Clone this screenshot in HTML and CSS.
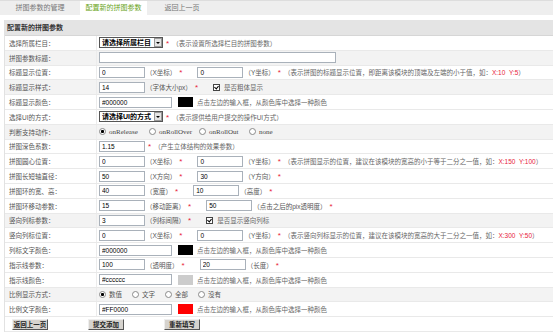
FILE: index.html
```html
<!DOCTYPE html>
<html>
<head>
<meta charset="utf-8">
<title>配置新的拼图参数</title>
<link rel="stylesheet" href="styles.css">
</head>
<body>
    <div class="tabs">
        <a class="tab">拼图参数的管理</a>
        <a class="tab active">配置新的拼图参数</a>
        <a class="tab">返回上一页</a>
    </div>

    <div class="panel">
        <div class="panel-title">配置新的拼图参数</div>
        <form>
            <div class="row">
                <label class="label">选择所属栏目：</label>
                <div class="field">
                    <span class="select"><select><option>请选择所属栏目</option></select></span>
                    <span class="req">*</span>
                    <span class="tip">（表示设置所选择栏目的拼图参数）</span>
                </div>
            </div>
            <div class="row alt">
                <label class="label">拼图参数标题：</label>
                <div class="field"><input type="text" class="txt txt-wide"></div>
            </div>
            <div class="row">
                <label class="label">标题显示位置：</label>
                <div class="field">
                    <input type="text" class="txt" value="0"><span class="unit">（X坐标）</span><span class="req">*</span>
                    <input type="text" class="txt next" value="0"><span class="unit">（Y坐标）</span><span class="req">*</span>
                    <span class="tip">（表示拼图的标题显示位置，即距离该模块的顶端及左端的小于值，如：<em>X:10&nbsp;&nbsp;Y:5</em>）</span>
                </div>
            </div>
            <div class="row alt">
                <label class="label">标题显示样式：</label>
                <div class="field">
                    <input type="text" class="txt" value="14"><span class="unit">（字体大小px）</span><span class="req">*</span>
                    <input type="checkbox" class="chk next" checked><span class="tip">是否粗体显示</span>
                </div>
            </div>
            <div class="row">
                <label class="label">标题显示颜色：</label>
                <div class="field">
                    <input type="text" class="txt txt-color" value="#000000"><span class="swatch sw-black"></span>
                    <span class="tip">点击左边的输入框，从颜色库中选择一种颜色</span>
                </div>
            </div>
            <div class="row">
                <label class="label">选择UI的方式：</label>
                <div class="field">
                    <span class="select"><select><option>请选择UI的方式</option></select></span>
                    <span class="req">*</span>
                    <span class="tip">（表示提供给用户提交的操作UI方式）</span>
                </div>
            </div>
            <div class="row alt">
                <label class="label">判断支持动作：</label>
                <div class="field radios">
                    <label class="opt mono"><input type="radio" name="act" checked>onRelease</label>
                    <label class="opt mono"><input type="radio" name="act">onRollOver</label>
                    <label class="opt mono"><input type="radio" name="act">onRollOut</label>
                    <label class="opt mono"><input type="radio" name="act">none</label>
                </div>
            </div>
            <div class="row">
                <label class="label">拼图深色系数：</label>
                <div class="field">
                    <input type="text" class="txt" value="1.15"><span class="req">*</span>
                    <span class="tip">（产生立体结构的效果参数）</span>
                </div>
            </div>
            <div class="row">
                <label class="label">拼图圆心位置：</label>
                <div class="field">
                    <input type="text" class="txt" value="0"><span class="unit">（X坐标）</span><span class="req">*</span>
                    <input type="text" class="txt next" value="0"><span class="unit">（Y坐标）</span><span class="req">*</span>
                    <span class="tip">（表示拼图显示的位置，建议在该模块的宽高的小于等于二分之一值，如：<em>X:150&nbsp;&nbsp;Y:100</em>）</span>
                </div>
            </div>
            <div class="row">
                <label class="label">拼图长短轴直径：</label>
                <div class="field">
                    <input type="text" class="txt" value="50"><span class="unit">（X方向）</span><span class="req">*</span>
                    <input type="text" class="txt next" value="30"><span class="unit">（Y方向）</span><span class="req">*</span>
                </div>
            </div>
            <div class="row">
                <label class="label">拼图环的宽、高：</label>
                <div class="field">
                    <input type="text" class="txt" value="40"><span class="unit">（宽度）</span><span class="req">*</span>
                    <input type="text" class="txt next" value="10"><span class="unit">（高度）</span><span class="req">*</span>
                </div>
            </div>
            <div class="row">
                <label class="label">拼图环移动参数：</label>
                <div class="field">
                    <input type="text" class="txt" value="15"><span class="unit">（移动距离）</span><span class="req">*</span>
                    <input type="text" class="txt next" value="50"><span class="unit">（点击之后的pix透明度）</span><span class="req">*</span>
                </div>
            </div>
            <div class="row alt">
                <label class="label">竖向列标参数：</label>
                <div class="field">
                    <input type="text" class="txt" value="3"><span class="unit">（列标间隔）</span><span class="req">*</span>
                    <input type="checkbox" class="chk next" checked><span class="tip">是否显示竖向列标</span>
                </div>
            </div>
            <div class="row">
                <label class="label">竖向列标位置：</label>
                <div class="field">
                    <input type="text" class="txt" value="0"><span class="unit">（X坐标）</span><span class="req">*</span>
                    <input type="text" class="txt next" value="0"><span class="unit">（Y坐标）</span><span class="req">*</span>
                    <span class="tip">（表示竖向列标显示的位置，建议在该模块的宽高的大于二分之一值，如：<em>X:300&nbsp;&nbsp;Y:50</em>）</span>
                </div>
            </div>
            <div class="row">
                <label class="label">列标文字颜色：</label>
                <div class="field">
                    <input type="text" class="txt txt-color" value="#000000"><span class="swatch sw-black"></span>
                    <span class="tip">点击左边的输入框，从颜色库中选择一种颜色</span>
                </div>
            </div>
            <div class="row">
                <label class="label">指示线参数：</label>
                <div class="field">
                    <input type="text" class="txt" value="100"><span class="unit">（透明度）</span><span class="req">*</span>
                    <input type="text" class="txt next" value="20"><span class="unit">（长度）</span><span class="req">*</span>
                </div>
            </div>
            <div class="row">
                <label class="label">指示线颜色：</label>
                <div class="field">
                    <input type="text" class="txt txt-color" value="#cccccc"><span class="swatch sw-gray"></span>
                    <span class="tip">点击左边的输入框，从颜色库中选择一种颜色</span>
                </div>
            </div>
            <div class="row alt">
                <label class="label">比例显示方式：</label>
                <div class="field radios">
                    <label class="opt short"><input type="radio" name="ratio" checked>数值</label>
                    <label class="opt short"><input type="radio" name="ratio">文字</label>
                    <label class="opt short"><input type="radio" name="ratio">全部</label>
                    <label class="opt short"><input type="radio" name="ratio">没有</label>
                </div>
            </div>
            <div class="row">
                <label class="label">比例文字颜色：</label>
                <div class="field">
                    <input type="text" class="txt txt-color" value="#FF0000"><span class="swatch sw-red"></span>
                    <span class="tip">点击左边的输入框，从颜色库中选择一种颜色</span>
                </div>
            </div>
            <div class="row buttons">
                <button type="button" class="btn">返回上一页</button>
                <button type="submit" class="btn">提交添加</button>
                <button type="reset" class="btn">重新填写</button>
            </div>
        </form>
    </div>
</body>
</html>
```

FILE: styles.css
```css
body {
    margin: 0;
    font-family: "Liberation Sans", "Noto Sans CJK SC", sans-serif;
    font-size: 6.5px;
    color: #555;
    background-color: #fff;
}

/* barra de abas */
.tabs {
    display: flex;
    height: 15px;
    background-color: #eee;
    border-top: 1px solid #ddd;
    box-sizing: border-box;
}

.tab {
    width: 70px;
    text-align: center;
    line-height: 14px;
    font-size: 7px;
    color: #777;
}

.tab:first-child {
    width: 80px;
}

.tab.active {
    width: 67px;
    background-color: #fff;
    color: #6aa51a;
}

.panel {
    margin: 5px 0 0 4px;
    border-left: 1px solid #e2e2e2;
}

.panel-title {
    height: 16px;
    line-height: 16px;
    padding-left: 2px;
    background-color: #e4e4e4;
    border-bottom: 1px solid #d6d6d6;
    box-sizing: border-box;
    font-size: 7px;
    font-weight: bold;
    color: #333;
}

.row {
    display: flex;
    align-items: center;
    height: 14.8px;
    border-bottom: 1px solid #e9e9e9;
    box-sizing: border-box;
}

.row.alt {
    background-color: #f3f3f3;
}

.label {
    width: 92px;
    padding-left: 4px;
    box-sizing: border-box;
    align-self: stretch;
    display: flex;
    align-items: center;
    border-right: 1px solid #ececec;
}

.field {
    display: flex;
    align-items: center;
    padding-left: 2px;
    white-space: nowrap;
}

.txt {
    width: 46px;
    height: 11px;
    box-sizing: border-box;
    margin: 0;
    padding: 0 2px;
    border: 1px solid #a9b1ba;
    font-family: "Liberation Sans", sans-serif;
    font-size: 6.5px;
    color: #000;
    background-color: #fff;
}

.txt-wide {
    width: 237px;
}

.txt-color {
    width: 73px;
}

.next {
    margin-left: 12px;
}

.unit {
    margin-left: 1px;
}

.req {
    margin: 0 3px;
    color: #e8233a;
    font-size: 8px;
    line-height: 6px;
    position: relative;
    top: 1px;
}

.tip {
    color: #666;
}

.tip em {
    font-style: normal;
    color: #e8233a;
}

/* select com seta classica */
.select {
    position: relative;
    display: inline-block;
    height: 11px;
}

.select select {
    appearance: none;
    -webkit-appearance: none;
    width: 64px;
    height: 11px;
    margin: 0;
    padding: 0 0 0 2px;
    border: 1px solid #555;
    border-radius: 0;
    background-color: #fff;
    font-family: "Liberation Sans", "Noto Sans CJK SC", sans-serif;
    font-size: 7px;
    font-weight: bold;
    color: #000;
    line-height: 9px;
}

.select::after {
    content: "";
    position: absolute;
    right: 1px;
    top: 1px;
    width: 8px;
    height: 9px;
    box-sizing: border-box;
    border: 1px solid #999;
    background: #e4e4e4;
}

.select::before {
    content: "";
    position: absolute;
    right: 3px;
    top: 5px;
    width: 0;
    height: 0;
    border-left: 2px solid transparent;
    border-right: 2px solid transparent;
    border-top: 2px solid #000;
    z-index: 1;
}

.swatch {
    display: inline-block;
    width: 15px;
    height: 10px;
    margin: 0 4px 0 6px;
}

.sw-black {
    background-color: #000;
}

.sw-gray {
    background-color: #ccc;
}

.sw-red {
    background-color: #f00;
}

/* radio e checkbox */
.radios .opt {
    display: flex;
    align-items: center;
}

.opt.mono {
    width: 50px;
    font-family: "Liberation Serif", serif;
    font-size: 7px;
    color: #444;
}

.opt.short {
    width: 33px;
}

input[type="radio"] {
    appearance: none;
    -webkit-appearance: none;
    width: 7px;
    height: 7px;
    margin: 0 3px 0 0;
    border: 1px solid #8a8a8a;
    border-radius: 50%;
    background-color: #fff;
    box-sizing: border-box;
}

input[type="radio"]:checked {
    background: radial-gradient(circle, #000 1.3px, #fff 1.8px);
}

.chk {
    appearance: none;
    -webkit-appearance: none;
    position: relative;
    width: 7px;
    height: 7px;
    margin-right: 4px;
    border: 1px solid #444;
    background-color: #fff;
    box-sizing: border-box;
}

.chk:checked::after {
    content: "";
    position: absolute;
    left: 1px;
    top: 0;
    width: 2px;
    height: 3px;
    border: solid #000;
    border-width: 0 1px 1px 0;
    transform: rotate(40deg);
}

.buttons {
    padding-left: 7px;
}

.btn {
    width: 36px;
    height: 11px;
    margin: 0 40px 0 0;
    padding: 0;
    background-color: #d6d3ce;
    border: 1px solid;
    border-color: #eee #555 #555 #eee;
    font-family: "Liberation Sans", "Noto Sans CJK SC", sans-serif;
    font-size: 6.5px;
    font-weight: bold;
    color: #222;
    line-height: 9px;
}
```
